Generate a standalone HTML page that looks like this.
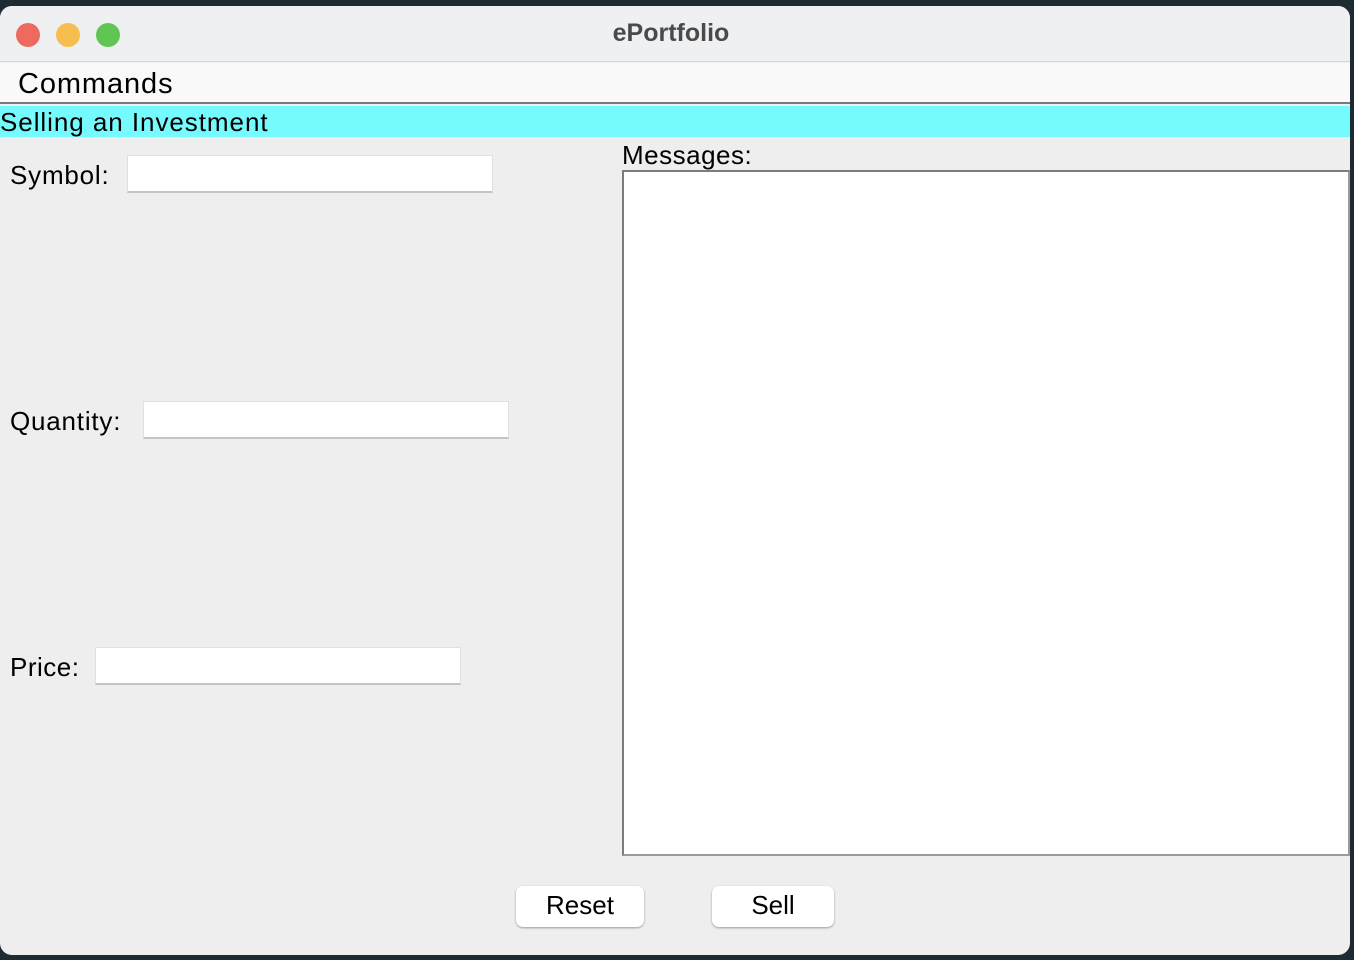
<!DOCTYPE html>
<html><head><meta charset="utf-8"><style>
*{margin:0;padding:0;box-sizing:border-box}
body{width:1354px;height:960px;background:#1f2b33;position:relative;overflow:hidden;font-family:"Liberation Sans",sans-serif;color:#000}
.win{position:absolute;left:0;top:6px;width:1350px;height:949px;background:#eeeeee;border-radius:12px;overflow:hidden}
.title{position:absolute;left:0;top:0;width:100%;height:56px;background:#eff0f2;border-bottom:1px solid #d8d8da}
.dot{position:absolute;top:17px;width:24px;height:24px;border-radius:50%}
.title .t{position:absolute;left:-4px;width:100%;top:13px;text-align:center;font-size:25px;font-weight:bold;color:#4a4a4a}
.menu{position:absolute;left:0;top:57px;width:100%;height:41px;background:#f9f9f9;border-bottom:2px solid #7a7a7a}
.menu span{position:absolute;left:18px;top:5px;font-size:29px;letter-spacing:0.9px}
.band{position:absolute;left:0;top:100px;width:100%;height:31px;background:#75fbfd;font-size:26px;line-height:33px;letter-spacing:0.95px}
.lbl{position:absolute;font-size:26px}
.fld{position:absolute;height:38px;background:#fff;border:1px solid #e0e0e0;border-bottom:2px solid #c4c4c4}
.ta{position:absolute;left:622px;top:164px;width:728px;height:686px;background:#fff;border:2px solid #7c7c7c;border-bottom-color:#9a9a9a;border-right-color:#9a9a9a}
.btn{position:absolute;top:880px;height:41px;background:#fff;border-radius:7px;box-shadow:0 1px 2px rgba(0,0,0,.35);font-size:26px;text-align:center;line-height:38px}
</style></head><body>
<div class="win">
 <div class="title">
  <div class="dot" style="left:16px;background:#ee6a5f"></div>
  <div class="dot" style="left:56px;background:#f5be4f"></div>
  <div class="dot" style="left:96px;background:#61c554"></div>
  <div class="t">ePortfolio</div>
 </div>
 <div class="menu"><span>Commands</span></div>
 <div class="band">Selling an Investment</div>
 <div class="lbl" style="left:10px;top:154px;letter-spacing:0.8px">Symbol:</div>
 <div class="fld" style="left:127px;top:149px;width:366px"></div>
 <div class="lbl" style="left:10px;top:400px;letter-spacing:0.8px">Quantity:</div>
 <div class="fld" style="left:143px;top:395px;width:366px"></div>
 <div class="lbl" style="left:10px;top:646px;letter-spacing:0.5px">Price:</div>
 <div class="fld" style="left:95px;top:641px;width:366px"></div>
 <div class="lbl" style="left:622px;top:134px;letter-spacing:0.5px">Messages:</div>
 <div class="ta"></div>
 <div class="btn" style="left:516px;width:128px">Reset</div>
 <div class="btn" style="left:712px;width:122px">Sell</div>
</div>
</body></html>
